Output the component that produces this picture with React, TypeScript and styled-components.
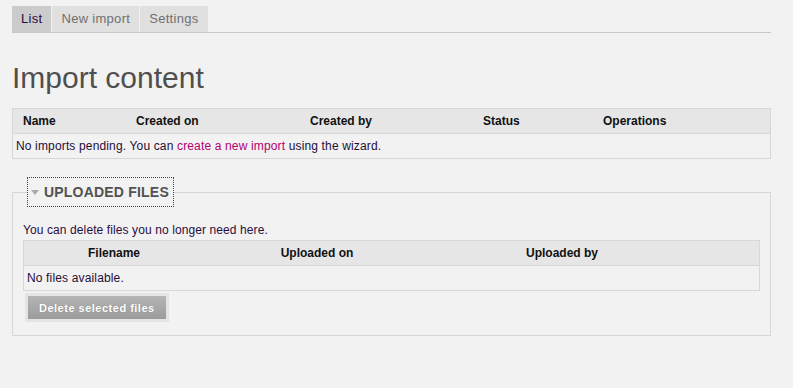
import React from 'react'
import styled, { createGlobalStyle } from 'styled-components'

const GlobalStyle = createGlobalStyle`
  html, body {
    margin: 0;
    padding: 0;
    background: #f2f2f2;
    font-family: Arial, "Liberation Sans", Helvetica, sans-serif;
    font-size: 12px;
    color: #222;
  }
`

const Page = styled.div`
  padding: 6px 22px 0 12px;
`

const Tabs = styled.ul`
  display: flex;
  margin: 0;
  padding: 0;
  list-style: none;
  border-bottom: 1px solid #c8c8c8;
`

const Tab = styled.li<{ $active?: boolean }>`
  height: 26px;
  line-height: 26px;
  padding: 0 9px;
  margin-right: 1px;
  font-size: 13px;
  letter-spacing: 0.3px;
  background: ${p => (p.$active ? '#cbcbcb' : '#e0e0e0')};
  color: ${p => (p.$active ? '#2a0d3f' : '#707070')};
`

const Title = styled.h1`
  margin: 27px 0 0;
  height: 48px;
  font-size: 30px;
  font-weight: normal;
  line-height: 36px;
  color: #4f4f4f;
`

const Table = styled.div<{ $cols: string }>`
  display: grid;
  grid-template-columns: ${p => p.$cols};
  border: 1px solid #d7d7d7;
`

const HeadCell = styled.div<{ $center?: boolean }>`
  height: 24px;
  line-height: 24px;
  padding-left: ${p => (p.$center ? '0' : '10px')};
  text-align: ${p => (p.$center ? 'center' : 'left')};
  font-weight: bold;
  color: #111;
  background: #e6e6e6;
  border-bottom: 1px solid #d7d7d7;
  white-space: nowrap;
`

const EmptyRow = styled.div`
  grid-column: 1 / -1;
  height: 24px;
  line-height: 24px;
  padding-left: 3px;
  letter-spacing: 0.15px;
  color: #1e0f36;
`

const Link = styled.a`
  color: #b3006e;
  text-decoration: none;
`

const Fieldset = styled.fieldset`
  margin: 18px 0 0;
  padding: 4px 10px 13px 10px;
  border: 1px solid #d7d7d7;
  min-width: 0;
`

const Legend = styled.legend`
  margin-left: 4px;
  padding: 0;
`

const LegendBox = styled.span`
  display: flex;
  align-items: center;
  gap: 5px;
  height: 28px;
  padding: 0 4px 0 3px;
  border: 1px dotted #444;
  font-size: 14px;
  font-weight: bold;
  letter-spacing: 0.2px;
  color: #525252;
`

const Arrow = styled.span`
  width: 0;
  height: 0;
  border-left: 4px solid transparent;
  border-right: 4px solid transparent;
  border-top: 5px solid #aaa;
`

const Note = styled.p`
  margin: 12px 0 3px 0;
  letter-spacing: 0.1px;
  color: #2a0d3f;
`

const ButtonFrame = styled.div`
  display: inline-block;
  margin: 2px 0 0 2px;
  padding: 3px;
  background: #e4e4e4;
`

const Button = styled.button`
  display: block;
  height: 23px;
  padding: 0 11px;
  border: 0;
  font-family: Arial, "Liberation Sans", sans-serif;
  font-size: 11px;
  font-weight: bold;
  letter-spacing: 0.5px;
  color: #fff;
  text-shadow: 0 0 1px rgba(0, 0, 0, 0.25);
  background: linear-gradient(#b5b5b5, #9b9b9b);
`

export default function App() {
  return (
    <Page>
      <GlobalStyle />
      <Tabs>
        <Tab $active>List</Tab>
        <Tab>New import</Tab>
        <Tab>Settings</Tab>
      </Tabs>
      <Title>Import content</Title>
      <Table $cols="113px 174px 173px 120px 1fr">
        <HeadCell>Name</HeadCell>
        <HeadCell>Created on</HeadCell>
        <HeadCell>Created by</HeadCell>
        <HeadCell>Status</HeadCell>
        <HeadCell>Operations</HeadCell>
        <EmptyRow>
          No imports pending. You can <Link href="#">create a new import</Link> using the wizard.
        </EmptyRow>
      </Table>
      <Fieldset>
        <Legend>
          <LegendBox>
            <Arrow />
            UPLOADED FILES
          </LegendBox>
        </Legend>
        <Note>You can delete files you no longer need here.</Note>
        <Table $cols="180px 226px 264px 1fr">
          <HeadCell $center>Filename</HeadCell>
          <HeadCell $center>Uploaded on</HeadCell>
          <HeadCell $center>Uploaded by</HeadCell>
          <HeadCell $center />
          <EmptyRow>No files available.</EmptyRow>
        </Table>
        <ButtonFrame>
          <Button>Delete selected files</Button>
        </ButtonFrame>
      </Fieldset>
    </Page>
  )
}
